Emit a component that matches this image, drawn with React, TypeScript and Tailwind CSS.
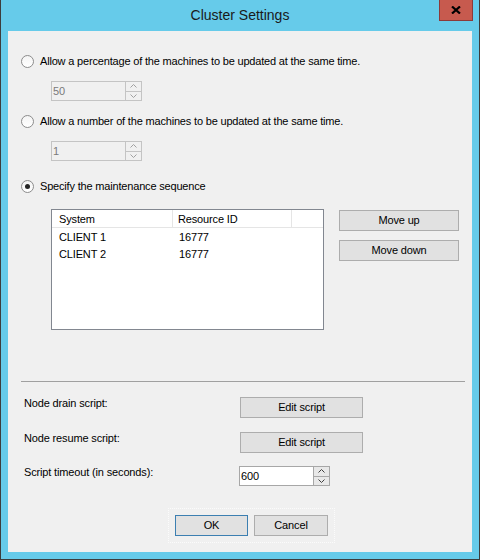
import React from 'react'

const font = { fontFamily: '"Liberation Sans", Arial, sans-serif' }

function Radio({ checked, label }: { checked?: boolean; label: string }) {
  return (
    <div className="flex h-[16px] items-center pl-[13px]">
      <span className="flex h-[13px] w-[13px] items-center justify-center rounded-full border border-[#8c8c8c] bg-gradient-to-b from-[#f4f4f4] to-[#ffffff]">
        {checked && <span className="h-[5px] w-[5px] rounded-full bg-[#252525]" />}
      </span>
      <span className="ml-[6px] text-[11px] tracking-[-0.18px] text-black">{label}</span>
    </div>
  )
}

function Chevron({ up, color }: { up?: boolean; color: string }) {
  return (
    <svg width="7" height="4" viewBox="0 0 7 4">
      <path d={up ? 'M0.5 3.5 L3.5 0.5 L6.5 3.5' : 'M0.5 0.5 L3.5 3.5 L6.5 0.5'} fill="none" stroke={color} strokeWidth="1" />
    </svg>
  )
}

function Spinner({ value, disabled }: { value: string; disabled?: boolean }) {
  const border = disabled ? 'border-[#c4c4c4]' : 'border-[#a7a7a7]'
  const arrow = disabled ? '#a0a0a0' : '#404040'
  return (
    <div className={`flex h-[20px] w-[91px] border ${border} ${disabled ? 'bg-[#f0f0f0]' : 'bg-white'}`}>
      <div className={`flex-1 pl-[1px] text-[11px] leading-[18px] ${disabled ? 'text-[#7a7a7a]' : 'text-black'}`}>{value}</div>
      <div className={`flex w-[16px] flex-col border-l ${border}`}>
        <div className={`flex flex-1 items-center justify-center border-b ${border} ${disabled ? 'bg-[#f0f0f0]' : 'bg-[#e8e8e8]'}`}>
          <Chevron up color={arrow} />
        </div>
        <div className={`flex flex-1 items-center justify-center ${disabled ? 'bg-[#f0f0f0]' : 'bg-[#e8e8e8]'}`}>
          <Chevron color={arrow} />
        </div>
      </div>
    </div>
  )
}

function Btn({ label, w, focused }: { label: string; w: string; focused?: boolean }) {
  return (
    <div
      className={`flex h-[21px] ${w} items-center justify-center border bg-[#e1e1e1] text-[11px] tracking-[-0.15px] text-black ${
        focused ? 'border-[#3c7fb1]' : 'border-[#adadad]'
      }`}
    >
      {label}
    </div>
  )
}

const rows = [
  { system: 'CLIENT 1', id: '16777' },
  { system: 'CLIENT 2', id: '16777' },
]

export default function App() {
  return (
    <div className="flex h-[560px] w-[480px] flex-col border-x border-b border-[#3d3d3d] bg-[#66cbea]" style={font}>
      {/* title bar */}
      <div className="relative h-[31px] shrink-0">
        <div className="pt-[5px] text-center text-[14px] text-[#1a1a1a]">Cluster Settings</div>
        <div className="absolute right-[6px] top-0 flex h-[21px] w-[34px] items-center justify-center border border-t-0 border-[#8c3a3a] bg-[#c75a4e]">
          <svg width="10" height="8" viewBox="0 0 10 8">
            <path d="M1 0.5 L9 7.5 M9 0.5 L1 7.5" stroke="#000" strokeWidth="2.2" />
          </svg>
        </div>
      </div>

      {/* client area */}
      <div className="mx-[7px] mb-[7px] flex flex-1 flex-col bg-[#f0f0f0]">
        <div className="mt-[22px]">
          <Radio label="Allow a percentage of the machines to be updated at the same time." />
        </div>
        <div className="mt-[12px] pl-[43px]">
          <Spinner value="50" disabled />
        </div>
        <div className="mt-[12px]">
          <Radio label="Allow a number of the machines to be updated at the same time." />
        </div>
        <div className="mt-[12px] pl-[43px]">
          <Spinner value="1" disabled />
        </div>
        <div className="mt-[17px]">
          <Radio checked label="Specify the maintenance sequence" />
        </div>

        {/* sequence list + move buttons */}
        <div className="mt-[15px] flex pl-[43px]">
          <div className="h-[121px] w-[273px] border border-[#828790] bg-white text-[11px] tracking-[-0.15px] text-black">
            <div className="flex h-[18px] border-b border-[#e5e5e5] leading-[19px]">
              <div className="w-[121px] border-r border-[#e5e5e5] pl-[7px]">System</div>
              <div className="w-[119px] border-r border-[#e5e5e5] pl-[5px]">Resource ID</div>
            </div>
            {rows.map((r) => (
              <div key={r.system} className="flex h-[17px] leading-[18px]">
                <div className="w-[122px] pl-[7px]">{r.system}</div>
                <div className="pl-[5px]">{r.id}</div>
              </div>
            ))}
          </div>
          <div className="ml-[15px] mt-[1px] flex flex-col gap-[9px]">
            <Btn label="Move up" w="w-[120px]" />
            <Btn label="Move down" w="w-[120px]" />
          </div>
        </div>

        <div className="ml-[13px] mt-[51px] h-px w-[444px] bg-[#a0a0a0]" />

        {/* scripts */}
        <div className="mt-[15px] flex h-[21px] items-start pl-[16px] text-[11px] tracking-[-0.15px] text-black">
          <div className="w-[216px] leading-[13px]">Node drain script:</div>
          <Btn label="Edit script" w="w-[123px]" />
        </div>
        <div className="mt-[14px] flex h-[21px] items-start pl-[16px] text-[11px] tracking-[-0.15px] text-black">
          <div className="w-[216px] leading-[13px]">Node resume script:</div>
          <Btn label="Edit script" w="w-[123px]" />
        </div>
        <div className="mt-[13px] flex h-[20px] items-start pl-[16px] text-[11px] tracking-[-0.15px] text-black">
          <div className="w-[215px] leading-[13px]">Script timeout (in seconds):</div>
          <Spinner value="600" />
        </div>

        {/* dialog buttons */}
        <div className="mt-[22px] flex pl-[160px]">
          <div className="flex gap-[6px] border border-dotted border-[#fbfbfb] p-[6px]">
            <Btn label="OK" w="w-[73px]" focused />
            <Btn label="Cancel" w="w-[74px]" />
          </div>
        </div>
      </div>
    </div>
  )
}
